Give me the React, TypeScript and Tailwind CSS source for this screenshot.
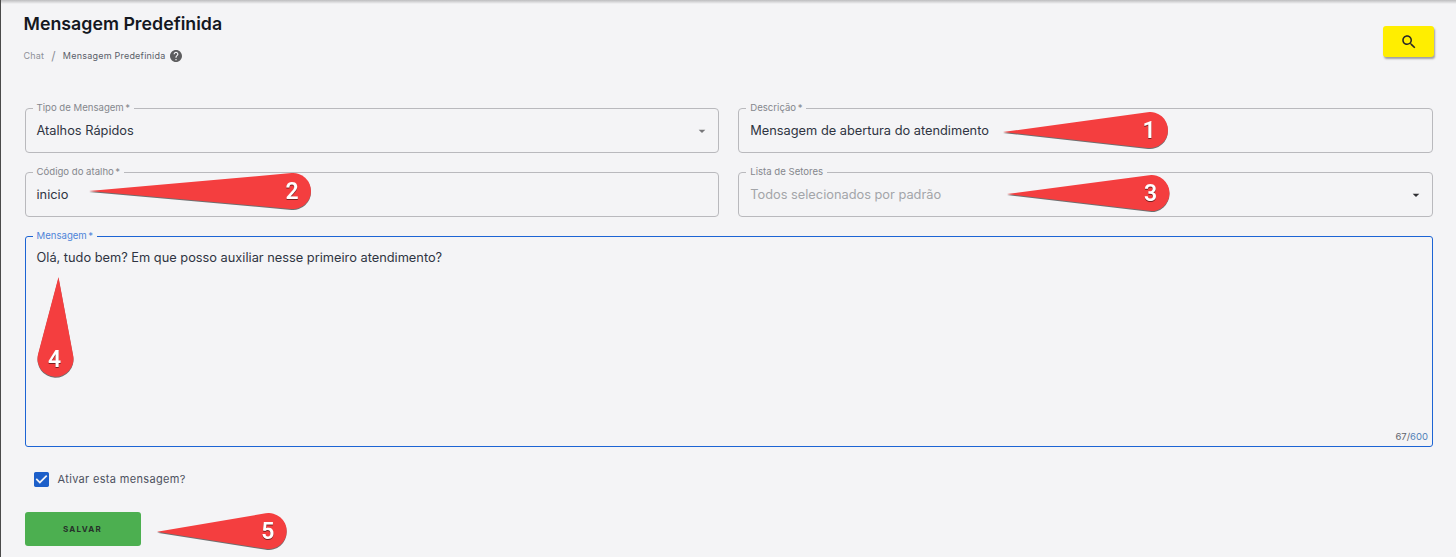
import React from "react";

const font = { fontFamily: "Inter, 'Noto Sans', sans-serif" };

function Callout({ tx, ty, cx, cy, label }: { tx: number; ty: number; cx: number; cy: number; label: string }) {
  const r = 18;
  const dx = tx - cx;
  const dy = ty - cy;
  const d = Math.hypot(dx, dy);
  const base = Math.atan2(dy, dx);
  const off = Math.acos(r / d);
  const ax = cx + r * Math.cos(base + off);
  const ay = cy + r * Math.sin(base + off);
  const bx = cx + r * Math.cos(base - off);
  const by = cy + r * Math.sin(base - off);
  return (
    <g>
      <path
        d={`M${tx} ${ty} L${bx} ${by} A${r} ${r} 0 1 0 ${ax} ${ay} Z`}
        fill="#f43e3f"
        style={{ filter: "drop-shadow(0.5px 1px 0.6px rgba(0,0,0,0.55))" }}
      />
      <text
        x={cx - 1}
        y={cy + 8}
        textAnchor="middle"
        fontSize="23"
        fontWeight="600"
        fill="#ffffff"
        style={{ fontFamily: "Roboto, Inter, sans-serif", filter: "drop-shadow(0.5px 1px 0.5px rgba(0,0,0,0.5))" }}
      >
        {label}
      </text>
    </g>
  );
}

function Field({
  label,
  required,
  value,
  placeholder,
  arrow,
  arrowDark,
}: {
  label: string;
  required?: boolean;
  value?: string;
  placeholder?: boolean;
  arrow?: boolean;
  arrowDark?: boolean;
}) {
  return (
    <div className="relative h-[45px] rounded border border-[#b9b9bd] flex items-center pl-[11px] pr-[8px]">
      <span className="absolute -top-[7px] left-[7px] bg-[#f4f4f6] px-[4px] text-[9.6px] leading-[12px] text-[#85878d]">
        {label}
        {required && <span className="ml-[1.5px]">*</span>}
      </span>
      <span className={`flex-1 text-[12.8px] ${placeholder ? "text-[#a3a5a9]" : "text-[#2f3442]"}`}>{value}</span>
      {arrow && (
        <svg width="16" height="16" viewBox="0 0 24 24" fill={arrowDark ? "#2f2f33" : "#77777a"}>
          <path d="M7 10l5 5 5-5z" />
        </svg>
      )}
    </div>
  );
}

export default function App() {
  return (
    <div style={font} className="relative h-[557px] w-[1456px] overflow-hidden bg-[#f4f4f6] border-l-[1.5px] border-[#4a4a4a]">
      <div className="absolute left-0 right-0 top-0 h-[4px] bg-gradient-to-b from-[#bdbdbf] to-[#f4f4f6]" />

      <div className="flex justify-between pl-[22.5px] pr-[22px] pt-[13px]">
        <div>
          <h1 className="text-[17.8px] leading-[22px] font-semibold text-[#14181f]">Mensagem Predefinida</h1>
          <div className="mt-[15px] flex items-center text-[9px] leading-[12px] tracking-[0.22px] text-[#5a5e69]">
            <span className="text-[#8d9098]">Chat</span>
            <span className="mx-[7px] text-[12px] text-[#8d9098]">/</span>
            <span>Mensagem Predefinida</span>
            <svg width="12" height="12" viewBox="2 2 20 20" fill="#5d5d5f" className="ml-[5px]">
              <path d="M12 2C6.48 2 2 6.48 2 12s4.48 10 10 10 10-4.48 10-10S17.52 2 12 2zm1 17h-2v-2h2v2zm2.07-7.75l-.9.92C13.45 12.9 13 13.5 13 15h-2v-.5c0-1.1.45-2.1 1.17-2.83l1.24-1.26c.37-.36.59-.86.59-1.41 0-1.1-.9-2-2-2s-2 .9-2 2H8c0-2.21 1.79-4 4-4s4 1.79 4 4c0 .88-.36 1.68-.93 2.25z" />
            </svg>
          </div>
        </div>
        <button className="mt-[13px] flex h-[31px] w-[51px] items-center justify-center rounded-[3px] bg-[#ffee00] shadow-[1px_2px_2px_rgba(0,0,0,0.35)]">
          <svg width="18" height="18" viewBox="0 0 24 24" fill="#26262a">
            <path d="M15.5 14h-.79l-.28-.27C15.41 12.59 16 11.11 16 9.5 16 5.91 13.09 3 9.5 3S3 5.91 3 9.5 5.91 16 9.5 16c1.61 0 3.09-.59 4.23-1.57l.27.28v.79l5 4.99L20.49 19l-4.99-5zm-6 0C7.01 14 5 11.99 5 9.5S7.01 5 9.5 5 14 7.01 14 9.5 11.99 14 9.5 14z" />
          </svg>
        </button>
      </div>

      <div className="mt-[46px] pl-[23.5px] pr-[23px]">
        <div className="grid grid-cols-2 gap-x-[19px] gap-y-[19px]">
          <Field label="Tipo de Mensagem" required value="Atalhos Rápidos" arrow />
          <Field label="Descrição" required value="Mensagem de abertura do atendimento" />
          <Field label="Código do atalho" required value="inicio" />
          <Field label="Lista de Setores" value="Todos selecionados por padrão" placeholder arrow arrowDark />
        </div>

        <div className="relative mt-[19px] h-[211px] rounded-[3px] border border-[#1c64d4] pl-[11px] pt-[12px]">
          <span className="absolute -top-[7px] left-[7px] bg-[#f4f4f6] px-[4px] text-[9.6px] leading-[12px] text-[#4f84d9]">
            Mensagem<span className="ml-[1.5px]">*</span>
          </span>
          <p className="text-[12.8px] leading-[18px] text-[#2f3442]">
            Olá, tudo bem? Em que posso auxiliar nesse primeiro atendimento?
          </p>
          <span className="absolute bottom-[3px] right-[4px] text-[9.5px] leading-[12px] text-[#5f646c]">
            67/<span className="text-[#4f7fb8]">600</span>
          </span>
        </div>

        <div className="mt-[24px] flex items-center pl-[9px]">
          <svg width="18" height="18" viewBox="3 3 18 18" className="h-[15px] w-[15px]" fill="#1c5fc9">
            <path d="M19 3H5c-1.11 0-2 .9-2 2v14c0 1.1.89 2 2 2h14c1.11 0 2-.9 2-2V5c0-1.1-.89-2-2-2zm-9 14l-5-5 1.41-1.41L10 14.17l7.59-7.59L19 8l-9 9z" />
          </svg>
          <span className="ml-[9px] text-[11px] leading-[16px] tracking-[0.33px] text-[#4d5160]">Ativar esta mensagem?</span>
        </div>

        <button className="mt-[25px] flex h-[34px] w-[116px] items-center justify-center rounded-[3px] bg-[#4caf50] text-[8px] font-bold tracking-[1.25px] text-[#26302a]">
          SALVAR
        </button>
      </div>

      <svg className="pointer-events-none absolute -left-[1.5px] top-0" width="1456" height="557">
        <Callout tx={1003} ty={132} cx={1150} cy={130} label="1" />
        <Callout tx={89} ty={191} cx={293} cy={191} label="2" />
        <Callout tx={1007} ty={194} cx={1151.5} cy={193} label="3" />
        <Callout tx={58.5} ty={277} cx={55.5} cy={358.7} label="4" />
        <Callout tx={157} ty={531.7} cx={268.7} cy={531} label="5" />
      </svg>
    </div>
  );
}
